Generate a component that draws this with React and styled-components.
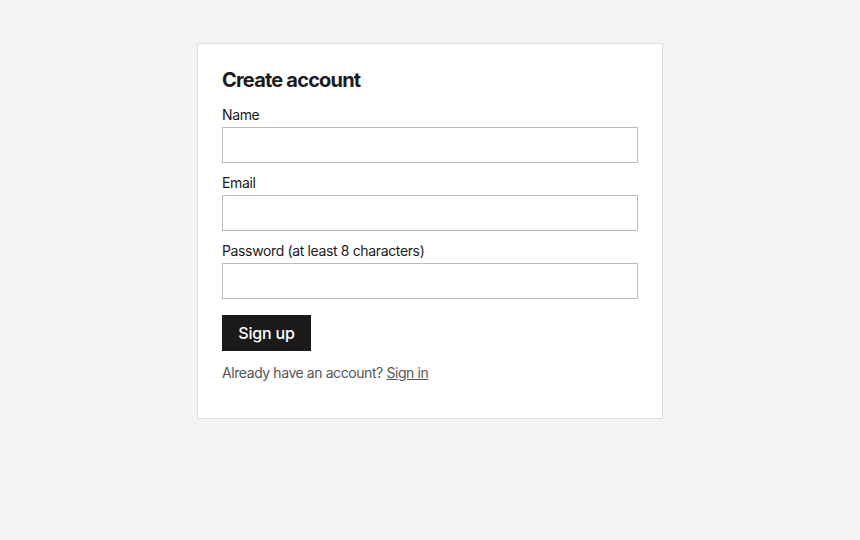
import React from "react";
import styled, { createGlobalStyle } from "styled-components";

const Global = createGlobalStyle`
  html, body { margin: 0; padding: 0; background: #f3f3f1; }
  body { font-family: Inter, "Noto Sans", sans-serif; color: #1a1a1a; }
  * { box-sizing: border-box; }
`;

const Page = styled.div`
  min-height: 540px;
  display: flex;
  justify-content: center;
  align-items: flex-start;
  padding-top: 43px;
`;

const Card = styled.form`
  width: 466px;
  background: #ffffff;
  border: 1px solid #dddddb;
  padding: 24px;
  display: flex;
  flex-direction: column;
`;

const Title = styled.h1`
  margin: 0 0 15px;
  font-size: 20px;
  line-height: 24px;
  font-weight: 700;
  letter-spacing: -0.8px;
  color: #1a1a1a;
`;

const Field = styled.div`
  display: flex;
  flex-direction: column;
  margin-bottom: 12px;
`;

const Label = styled.label`
  font-size: 14px;
  line-height: 16px;
  letter-spacing: -0.36px;
  margin-bottom: 4px;
  color: #1a1a1a;
`;

const Input = styled.input`
  height: 36px;
  width: 100%;
  border: 1px solid #b9b9b9;
  border-radius: 0;
  background: #fff;
  padding: 0 10px;
  font: inherit;
  font-size: 14px;
  outline: none;
`;

const Button = styled.button`
  align-self: flex-start;
  margin-top: 4px;
  height: 36px;
  width: 89px;
  padding: 0;
  background: #1a1a1a;
  color: #ffffff;
  border: none;
  border-radius: 0;
  font-family: inherit;
  font-size: 16px;
  font-weight: 500;
  letter-spacing: -0.2px;
`;

const Note = styled.p`
  margin: 13px 0 13px;
  font-size: 14px;
  line-height: 17px;
  letter-spacing: -0.42px;
  color: #555555;
`;

const Link = styled.a`
  color: #555555;
  text-decoration: underline;
`;

export default function App() {
  return (
    <>
      <Global />
      <Page>
        <Card onSubmit={(e) => e.preventDefault()}>
          <Title>Create account</Title>
          <Field>
            <Label htmlFor="name">Name</Label>
            <Input id="name" type="text" />
          </Field>
          <Field>
            <Label htmlFor="email">Email</Label>
            <Input id="email" type="email" />
          </Field>
          <Field>
            <Label htmlFor="password">Password (at least 8 characters)</Label>
            <Input id="password" type="password" />
          </Field>
          <Button type="submit">Sign up</Button>
          <Note>
            Already have an account? <Link href="#">Sign in</Link>
          </Note>
        </Card>
      </Page>
    </>
  );
}
